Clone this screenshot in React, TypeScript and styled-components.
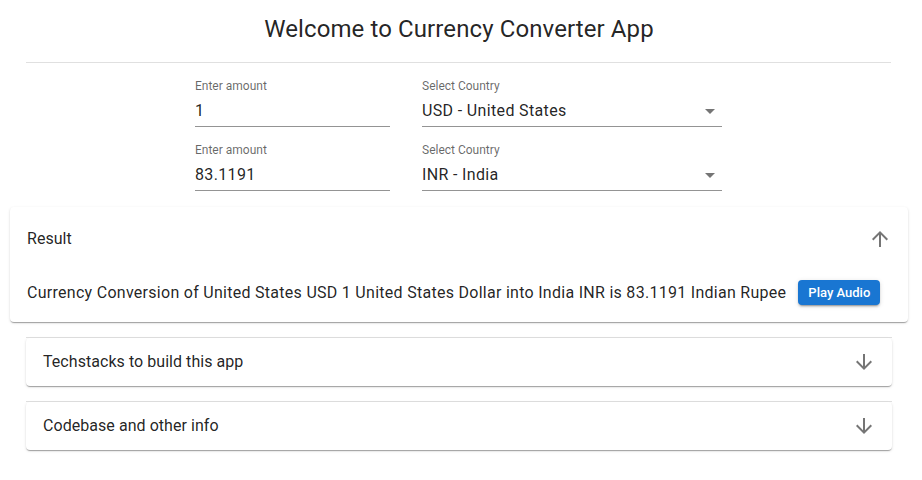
import React from "react";
import styled, { createGlobalStyle } from "styled-components";

const Global = createGlobalStyle`
  html, body { margin: 0; padding: 0; background: #fff; }
  body { font-family: Roboto, "Helvetica", "Arial", sans-serif; color: rgba(0,0,0,0.87); }
  * { box-sizing: border-box; }
`;

const Page = styled.div`
  width: 922px;
  padding: 0 30px 0 26px;
`;

const Title = styled.h1`
  margin: 13px 0 17px;
  font-size: 24px;
  font-weight: 400;
  line-height: 32px;
  text-align: center;
  letter-spacing: 0.1px;
`;

const Divider = styled.hr`
  margin: 0 1px 15px 0;
  border: none;
  border-top: 1px solid rgba(0, 0, 0, 0.12);
`;

const Form = styled.div`
  display: grid;
  grid-template-columns: 195px 300px;
  column-gap: 32px;
  row-gap: 15px;
  justify-content: center;
  margin-bottom: 16px;
  padding-right: 1px;
`;

const Field = styled.div`
  display: flex;
  flex-direction: column;
  border-bottom: 1px solid rgba(0, 0, 0, 0.42);
  height: 49px;
`;

const Label = styled.span`
  font-size: 12px;
  line-height: 16px;
  color: rgba(0, 0, 0, 0.6);
  margin-bottom: 5px;
`;

const Value = styled.div`
  display: flex;
  align-items: center;
  justify-content: space-between;
  font-size: 16px;
  line-height: 24px;
  letter-spacing: 0.35px;
  color: rgba(0, 0, 0, 0.87);
`;

const Caret = styled.svg`
  width: 24px;
  height: 24px;
  fill: rgba(0, 0, 0, 0.54);
`;

const Accordion = styled.section<{ $wide?: boolean; $divider?: boolean }>`
  position: relative;
  background: #fff;
  border-radius: 4px;
  margin: ${(p) => (p.$wide ? "0 -16px 16px" : "0 0 16px")};
  box-shadow: 0px 2px 1px -1px rgba(0, 0, 0, 0.2), 0px 1px 1px 0px rgba(0, 0, 0, 0.14),
    0px 1px 3px 0px rgba(0, 0, 0, 0.12);
  ${(p) =>
    p.$divider &&
    `&::before {
      content: "";
      position: absolute;
      left: 0; right: 0; top: -1px;
      height: 1px;
      background: rgba(0, 0, 0, 0.12);
    }`}
`;

const Summary = styled.div<{ $expanded?: boolean }>`
  display: flex;
  align-items: center;
  justify-content: space-between;
  min-height: ${(p) => (p.$expanded ? "64px" : "48px")};
  padding: 0 16px 0 17px;
  font-size: 16px;
  line-height: 24px;
  letter-spacing: 0.05px;
`;

const Arrow = styled.svg`
  width: 24px;
  height: 24px;
  fill: rgba(0, 0, 0, 0.54);
`;

const Details = styled.div`
  display: flex;
  align-items: center;
  gap: 12px;
  padding: 9px 16px 17px 17px;
  font-size: 16px;
  line-height: 25px;
`;

const ResultText = styled.span`
  letter-spacing: 0.28px;
`;

const PlayButton = styled.button`
  font-family: Roboto, "Helvetica", "Arial", sans-serif;
  font-size: 13px;
  font-weight: 500;
  line-height: 17px;
  color: #fff;
  background: #1976d2;
  border: none;
  border-radius: 4px;
  padding: 4px 10px;
  box-shadow: 0px 3px 1px -2px rgba(0,0,0,0.2), 0px 2px 2px 0px rgba(0,0,0,0.14), 0px 1px 5px 0px rgba(0,0,0,0.12);
  cursor: pointer;
`;

const up = "M4 12l1.41 1.41L11 7.83V20h2V7.83l5.58 5.59L20 12l-8-8-8 8z";
const down = "M20 12l-1.41-1.41L13 16.17V4h-2v12.17l-5.58-5.59L4 12l8 8 8-8z";

const DropIcon = () => (
  <Caret viewBox="0 0 24 24">
    <path d="M7 10l5 5 5-5z" />
  </Caret>
);

export default function App() {
  return (
    <>
      <Global />
      <Page>
        <Title>Welcome to Currency Converter App</Title>
        <Divider />
        <Form>
          <Field>
            <Label>Enter amount</Label>
            <Value>1</Value>
          </Field>
          <Field>
            <Label>Select Country</Label>
            <Value>
              USD - United States
              <DropIcon />
            </Value>
          </Field>
          <Field>
            <Label>Enter amount</Label>
            <Value>83.1191</Value>
          </Field>
          <Field>
            <Label>Select Country</Label>
            <Value>
              INR - India
              <DropIcon />
            </Value>
          </Field>
        </Form>
        <Accordion $wide>
          <Summary $expanded>
            Result
            <Arrow viewBox="0 0 24 24">
              <path d={up} />
            </Arrow>
          </Summary>
          <Details>
            <ResultText>
              Currency Conversion of United States USD 1 United States Dollar into India INR is 83.1191 Indian Rupee
            </ResultText>
            <PlayButton>Play Audio</PlayButton>
          </Details>
        </Accordion>
        <Accordion $divider>
          <Summary>
            Techstacks to build this app
            <Arrow viewBox="0 0 24 24">
              <path d={down} />
            </Arrow>
          </Summary>
        </Accordion>
        <Accordion $divider>
          <Summary>
            Codebase and other info
            <Arrow viewBox="0 0 24 24">
              <path d={down} />
            </Arrow>
          </Summary>
        </Accordion>
      </Page>
    </>
  );
}
